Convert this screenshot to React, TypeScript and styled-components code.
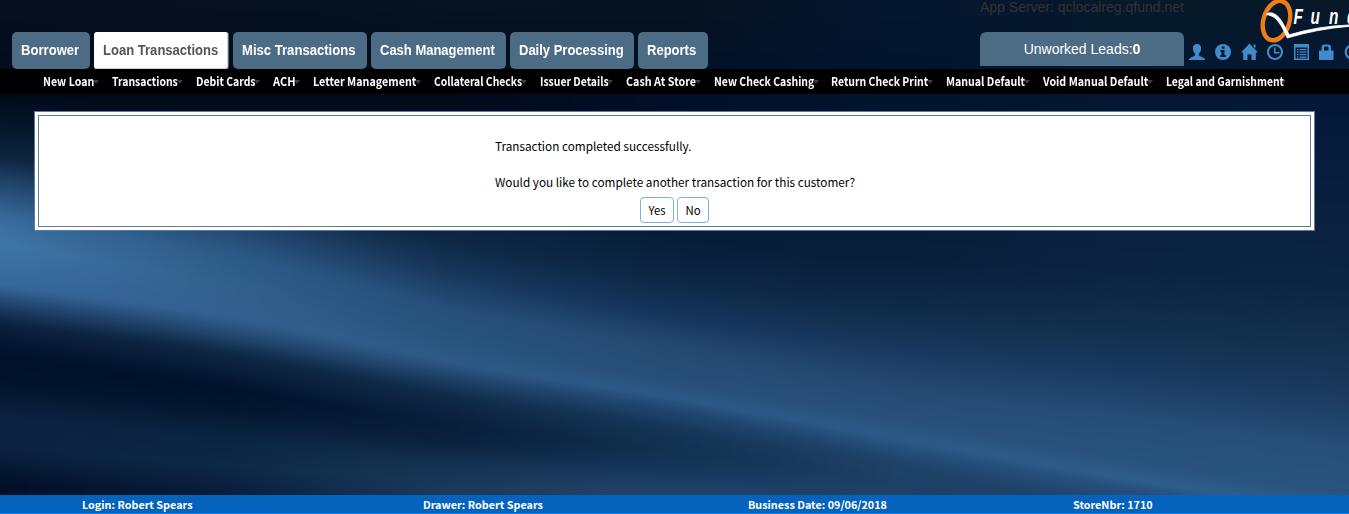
import React from "react";
import styled, { createGlobalStyle } from "styled-components";

const GlobalStyle = createGlobalStyle`
  html, body { margin: 0; padding: 0; background: #020b1a; overflow: hidden; }
  * { box-sizing: border-box; }
`;

const arial = `"Liberation Sans", Arial, sans-serif`;
const source = `"Noto Sans CJK SC", "Open Sans", sans-serif`;

/* ---------- backdrop: soft light bands, each row is one contour of the silk ---------- */
const XS = [0, 225, 450, 675, 900, 1125, 1349];
type Contour = { y: number[]; c: string[] };
const CONTOURS: Contour[] = [
  { y: [0, 0, 0, 0, 0, 0, 0], c: ["060e1e", "061020", "061320", "06121f", "051630", "071829", "071829"] },
  { y: [95, 95, 95, 95, 95, 95, 95], c: ["000b1a", "000a18", "000b1a", "000f28", "01152d", "041734", "04183a"] },
  { y: [128, 160, 205, 240, 260, 270, 290], c: ["04182e", "061c36", "0a2240", "071d39", "081f3c", "0c2443", "0d2645"] },
  { y: [158, 190, 238, 275, 305, 325, 345], c: ["0f2744", "0f2a48", "0d2744", "0c2644", "0f2a48", "112e4c", "14304f"] },
  { y: [182, 216, 270, 312, 345, 370, 400], c: ["22466d", "1f4269", "17365a", "14345a", "19375c", "193a5f", "1c3c60"] },
  { y: [215, 252, 306, 345, 386, 415, 445], c: ["376a9b", "2c5b87", "264e78", "244a70", "254a72", "254d76", "264e78"] },
  { y: [240, 284, 340, 380, 420, 460, 495], c: ["3e75a7", "325f8c", "28547e", "264e76", "27507a", "28537e", "29547e"] },
  { y: [284, 316, 361, 397, 437, 477, 512], c: ["36689a", "325f8f", "2e5a86", "2c5a88", "2d5c88", "2e5f8a", "2e5f8a"] },
  { y: [304, 333, 377, 409, 447, 489, 528], c: ["1d3f68", "224870", "1e4167", "20466f", "24507c", "254d7a", "254d7a"] },
  { y: [324, 352, 394, 430, 464, 515, 560], c: ["0a1f3c", "0d2743", "0f2b49", "143457", "1e4166", "1f4268", "1f4268"] },
  { y: [354, 386, 422, 450, 485, 540, 590], c: ["001029", "00122b", "081d3a", "12314f", "1d4065", "1f4268", "1f4268"] },
  { y: [378, 408, 440, 468, 500, 560, 610], c: ["01132b", "03162f", "09203d", "15365a", "214469", "1f4268", "1f4268"] },
  { y: [415, 438, 462, 484, 520, 580, 630], c: ["0c2140", "0a2542", "143150", "1e4065", "234870", "1f4268", "1f4268"] },
  { y: [445, 464, 480, 500, 540, 600, 650], c: ["0c2142", "0c2845", "193758", "24476b", "234870", "1f4268", "1f4268"] },
  { y: [486, 496, 500, 520, 560, 620, 670], c: ["000e24", "071b38", "1c3c60", "24476b", "234870", "1f4268", "1f4268"] },
];
const rgb = (h: string) => [0, 2, 4].map((i) => parseInt(h.slice(i, i + 2), 16));
const spline = (ys: number[], i: number, t: number) => {
  const p1 = ys[i], p2 = ys[i + 1];
  const p0 = i > 0 ? ys[i - 1] : 2 * p1 - p2;
  const p3 = i + 2 < ys.length ? ys[i + 2] : 2 * p2 - p1;
  return p1 + 0.5 * t * (p2 - p0 + t * (2 * p0 - 5 * p1 + 4 * p2 - p3 + t * (3 * (p1 - p2) + p3 - p0)));
};
const STEPS = 9;
const bands = CONTOURS.slice(0, -1).flatMap((a, k) => {
  const b = CONTOURS[k + 1];
  return Array.from({ length: STEPS }, (_, s) => {
    const f = s / STEPS;
    const ys = a.y.map((v, i) => v + (b.y[i] - v) * f);
    const stops = a.c.map((c, i) => {
      const p = rgb(c), q = rgb(b.c[i]);
      return `rgb(${p.map((v, j) => Math.round(v + (q[j] - v) * f)).join(",")})`;
    });
    const pts: string[] = [];
    for (let i = 0; i < XS.length - 1; i++)
      for (let n = 0; n < 6; n++) {
        const t = n / 6;
        pts.push(`${(XS[i] + (XS[i + 1] - XS[i]) * t).toFixed(1)} ${spline(ys, i, t).toFixed(1)}`);
      }
    pts.push(`1349 ${ys[6].toFixed(1)}`);
    const first = k === 0 && s === 0;
    const edge = first ? "H1370" : `L${pts.join("L")}L1370 ${ys[6]}`;
    return { id: `band${k}x${s}`, stops, d: `M-20 ${first ? -20 : ys[0]}${edge}V700H-20Z` };
  });
});

const BackdropSvg = styled.svg`
  position: absolute;
  inset: 0;
  z-index: -1;
  display: block;
`;
const Backdrop = () => (
  <BackdropSvg width="1349" height="514" viewBox="0 0 1349 514" aria-hidden="true">
    <defs>
      <filter id="soft" x="-5%" y="-5%" width="110%" height="110%" colorInterpolationFilters="sRGB">
        <feGaussianBlur stdDeviation="2.5" />
      </filter>
      {bands.map((b) => (
        <linearGradient key={b.id} id={b.id} gradientUnits="userSpaceOnUse" x1="0" x2="1349" y1="0" y2="0">
          {b.stops.map((c, i) => (
            <stop key={i} offset={XS[i] / 1349} stopColor={c} />
          ))}
        </linearGradient>
      ))}
    </defs>
    <g filter="url(#soft)">
      {bands.map((b) => (
        <path key={b.id} d={b.d} fill={`url(#${b.id})`} />
      ))}
    </g>
  </BackdropSvg>
);

/* ---------- layout ---------- */
const Page = styled.div`
  position: relative;
  z-index: 0;
  width: 1349px;
  height: 514px;
  overflow: hidden;
  display: flex;
  flex-direction: column;
  font-family: ${source};
`;
const Header = styled.header`
  display: flex;
  height: 69px;
  flex: none;
`;
const Tabs = styled.nav`
  display: flex;
  align-items: flex-end;
  gap: 4px;
  width: 980px;
  padding-left: 12px;
  flex: none;
`;
const Tab = styled.a<{ $w: number; $active?: boolean }>`
  width: ${(p) => p.$w}px;
  height: 37px;
  padding-left: 9px;
  margin-right: ${(p) => (p.$active ? 1 : 0)}px;
  border-radius: ${(p) => (p.$active ? "3px" : "5px")};
  background: ${(p) => (p.$active ? "#fff" : "#4c6b84")};
  color: ${(p) => (p.$active ? "#555" : "#fff")};
  box-shadow: ${(p) => (p.$active ? "inset -1px -1px 0 #cfcfcf, 1px 0 0 #4c6b84" : "none")};
  font: bold 14px/37px ${arial};
  white-space: nowrap;
`;
/* condenses a label horizontally to the narrow faces of the tabs and the menu */
const Label = styled.span<{ $squeeze: number }>`
  display: inline-block;
  transform: scaleX(${(p) => p.$squeeze});
  transform-origin: left;
`;
const Side = styled.div`
  display: flex;
  flex-direction: column;
  width: 204px;
  flex: none;
`;
const Server = styled.div`
  height: 32px;
  font: 14px/15px ${arial};
  color: #333;
  white-space: nowrap;
`;
const Leads = styled.div`
  height: 34px;
  border-radius: 6px 6px 0 0;
  background: #4c6b84;
  color: #fff;
  text-align: center;
  font: 14px/34px ${arial};
`;
const Brand = styled.div`
  display: flex;
  flex-direction: column;
  width: 165px;
  overflow: hidden;
`;
const LogoSvg = styled.svg`
  flex: none;
  display: block;
`;
const IconSvg = styled.svg`
  flex: none;
  display: block;
  margin: -2px 0 0 4px;
`;

const MenuBar = styled.nav`
  display: flex;
  height: 25px;
  flex: none;
  padding-left: 43px;
  background: #000;
`;
const MenuItem = styled.a<{ $w: number }>`
  position: relative;
  width: ${(p) => p.$w}px;
  flex: none;
  color: #fff;
  font: bold 12px/24px ${source};
  white-space: nowrap;
`;
const Caret = styled.i<{ $x: number }>`
  position: absolute;
  left: ${(p) => p.$x}px;
  top: 11px;
  border: 3px solid transparent;
  border-top: 4px solid #3c3c3c;
  border-bottom: 0;
`;

const Main = styled.main`
  flex: 1;
  padding: 17px 34px 0 34px;
`;
const Panel = styled.section`
  width: 1281px;
  height: 120px;
  padding: 3px;
  border: 1px solid #5b7d99;
  background: #fff;
`;
const PanelInner = styled.div`
  height: 112px;
  border: 1px solid #5b7d99;
  padding: 21px 0 0 456px;
  color: #000;
  font-size: 11.75px;
`;
const Message = styled.p<{ $gap: number }>`
  margin: 0 0 ${(p) => p.$gap}px;
  line-height: 18px;
  white-space: nowrap;
`;
const Actions = styled.div`
  display: flex;
  gap: 3px;
  padding-left: 145px;
`;
const Button = styled.button<{ $w: number }>`
  width: ${(p) => p.$w}px;
  height: 26px;
  padding: 0;
  border: 1px solid #7fb1dc;
  border-radius: 4px;
  background: #fff;
  color: #000;
  font: 11.4px/22px ${source};
`;
const Footer = styled.footer`
  display: flex;
  height: 19px;
  flex: none;
  padding-left: 82px;
  background: #0563bd;
  border-bottom: 1px solid #0a80f0;
  color: #fff;
  font: bold 10.8px/18px ${source};
`;
const FootCell = styled.span<{ $w: number }>`
  width: ${(p) => p.$w}px;
  flex: none;
  white-space: nowrap;
`;

const Logo = () => (
  <LogoSvg width="165" height="45" viewBox="1184 0 165 45">
    <ellipse cx="1276.500" cy="20.600" rx="13" ry="20.200" fill="none" stroke="#ee7d1a" strokeWidth="4.400" transform="rotate(17 1276.500 20.600)" />
    <path d="M1266 14.500C1269.500 11.500 1274.500 12.500 1279 17.500C1283 22.500 1285.500 28 1289.300 34.800Q1318 26 1349 25V26.400Q1318 28.800 1287.300 38C1284 30.500 1281 24.500 1277 20C1273 15.800 1269.500 15.200 1266 14.500Z" fill="#fff" stroke="#fff" strokeWidth="0.8" />
    <g fill="#fff" fontFamily={arial} fontWeight="bold" fontStyle="italic" fontSize="22">
      <text transform="translate(1293.500 24) scale(.7 1)">F</text>
      <text transform="translate(1310.500 24) scale(.7 1)">u</text>
      <text transform="translate(1329 24) scale(.7 1)">n</text>
      <text transform="translate(1347 24) scale(.7 1)">d</text>
    </g>
  </LogoSvg>
);

const IconRow = () => (
  <IconSvg width="161" height="18" viewBox="1188 43 161 18" fill="#428bca">
    <path d="M1197 44c-3 0-4.300 2-4.100 4.600.1 2.400 1 4 2.200 5.200v1.700l-5 2.400c-.8.400-1.100 1-1.100 2.100h16c0-1.100-.3-1.700-1.100-2.100l-5-2.400v-1.700c1.200-1.200 2.100-2.800 2.200-5.200.2-2.600-1.100-4.600-4.100-4.600z" />
    <circle cx="1223" cy="52" r="8" />
    <path d="M1221.800 46.500h2.700v2.300h-2.700zM1220.500 50h4v5h1.200v2h-5.400v-2h1.200v-3h-1z" fill="#071829" />
    <path d="M1249.500 43.500l8.500 9h-2.200V60h-4.300v-5.500h-4V60h-4.300v-7.500h-2.200zM1253.500 44.500h2v4l-2-2z" />
    <circle cx="1275" cy="52" r="7" fill="none" stroke="#428bca" strokeWidth="2.100" />
    <path d="M1274 47.500h1.500v4.500h4v1.500h-5.500z" />
    <path fillRule="evenodd" d="M1294 44h15v16h-15zM1295.500 47.500v11h12v-11z" />
    <path d="M1297 49h1.500v1.200h-1.500zm2.500 0h7v1.200h-7zM1297 51.500h1.500v1.200h-1.500zm2.500 0h7v1.200h-7zM1297 54h1.500v1.200h-1.500zm2.500 0h7v1.200h-7zM1297 56.500h1.500v1.200h-1.500zm2.500 0h7v1.200h-7z" />
    <path fillRule="evenodd" d="M1319 50.500h2.500v-3q0-3 3-3h3.500q3 0 3 3v3h2.500v9.500h-14.500zM1324 50.500h4.500v-2.500q0-1.500-1.200-1.500h-2.100q-1.200 0-1.200 1.500z" />
    <circle cx="1352.500" cy="52" r="6.800" fill="none" stroke="#428bca" strokeWidth="2.200" />
  </IconSvg>
);

const tabs = [
  { label: "Borrower", w: 78, squeeze: 0.935 },
  { label: "Loan Transactions", w: 134, squeeze: 0.932, active: true },
  { label: "Misc Transactions", w: 134, squeeze: 0.935 },
  { label: "Cash Management", w: 135, squeeze: 0.928 },
  { label: "Daily Processing", w: 124, squeeze: 0.928 },
  { label: "Reports", w: 70, squeeze: 0.93 },
];
const menu = [
  { label: "New Loan", x: 43, end: 94, squeeze: 0.885 },
  { label: "Transactions", x: 112, end: 178, squeeze: 0.87 },
  { label: "Debit Cards", x: 195.5, end: 255, squeeze: 0.87 },
  { label: "ACH", x: 273, end: 295, squeeze: 0.92 },
  { label: "Letter Management", x: 313, end: 416, squeeze: 0.895 },
  { label: "Collateral Checks", x: 433.5, end: 522, squeeze: 0.863 },
  { label: "Issuer Details", x: 539.5, end: 608, squeeze: 0.868 },
  { label: "Cash At Store", x: 626, end: 696, squeeze: 0.897 },
  { label: "New Check Cashing", x: 713.5, end: 814, squeeze: 0.873 },
  { label: "Return Check Print", x: 831, end: 928, squeeze: 0.87 },
  { label: "Manual Default", x: 946, end: 1025, squeeze: 0.883 },
  { label: "Void Manual Default", x: 1043, end: 1148, squeeze: 0.89 },
  { label: "Legal and Garnishment", x: 1166, end: 1281, squeeze: 0.864 },
];

export default function App() {
  return (
    <Page>
      <GlobalStyle />
      <Backdrop />
      <Header>
        <Tabs>
          {tabs.map((t) => (
            <Tab key={t.label} $w={t.w} $active={t.active}>
              <Label $squeeze={t.squeeze}>{t.label}</Label>
            </Tab>
          ))}
        </Tabs>
        <Side>
          <Server>App Server: qclocalreg.qfund.net</Server>
          <Leads>Unworked Leads:<b>0</b></Leads>
        </Side>
        <Brand>
          <Logo />
          <IconRow />
        </Brand>
      </Header>
      <MenuBar>
        {menu.map((m, i) => (
          <MenuItem key={m.label} $w={(menu[i + 1]?.x ?? 1310) - m.x}>
            <Caret $x={m.end - m.x - 1} />
            <Label $squeeze={m.squeeze}>{m.label}</Label>
          </MenuItem>
        ))}
      </MenuBar>
      <Main>
        <Panel>
          <PanelInner>
            <Message $gap={18}>Transaction completed successfully.</Message>
            <Message $gap={6}>Would you like to complete another transaction for this customer?</Message>
            <Actions>
              <Button $w={34}>Yes</Button>
              <Button $w={32}>No</Button>
            </Actions>
          </PanelInner>
        </Panel>
      </Main>
      <Footer>
        <FootCell $w={341}>Login: Robert Spears</FootCell>
        <FootCell $w={325}>Drawer: Robert Spears</FootCell>
        <FootCell $w={325}>Business Date: 09/06/2018</FootCell>
        <FootCell $w={200}>StoreNbr: 1710</FootCell>
      </Footer>
    </Page>
  );
}
